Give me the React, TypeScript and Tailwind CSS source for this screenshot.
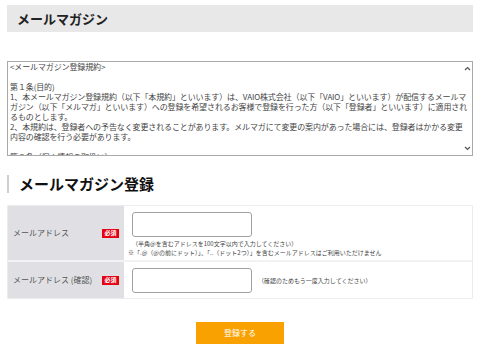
import React from "react";

const terms = `<メールマガジン登録規約>

第１条(目的)
1、本メールマガジン登録規約（以下「本規約」といいます）は、VAIO株式会社（以下「VAIO」といいます）が配信するメールマガジン（以下「メルマガ」といいます）への登録を希望されるお客様で登録を行った方（以下「登録者」といいます）に適用されるものとします。
2、本規約は、登録者への予告なく変更されることがあります。メルマガにて変更の案内があった場合には、登録者はかかる変更内容の確認を行う必要があります。

第２条（個人情報の取扱い）
1、登録者の個人情報は、VAIOの「個人情報の取扱いについて」に基づき、適切に管理いたします。
2、VAIOは、登録者の個人情報をメルマガの配信およびお問い合わせへの対応のために利用いたします。

第３条（登録）
1、登録者は、本規約に同意のうえ、VAIOの定める方法により登録を行うものとします。
2、登録者は、登録内容に変更が生じた場合、速やかに変更の手続きを行うものとします。

第４条（配信）
1、メルマガの配信内容、配信頻度および配信時期は、VAIOが任意に決定するものとします。
2、VAIOは、登録者への事前の通知なく、メルマガの配信を中止または終了することがあります。

第５条（登録の解除）
1、登録者は、VAIOの定める方法により、いつでも登録を解除することができます。
2、VAIOは、登録者が本規約に違反した場合、登録者の承諾なく登録を解除することがあります。

第６条（免責事項）
1、VAIOは、メルマガの内容について、その正確性、有用性等を保証するものではありません。
2、VAIOは、メルマガの配信の遅延、不達その他の事由により登録者に生じた損害について、一切の責任を負いません。

第７条（著作権）
メルマガに掲載される文章、画像等の著作権は、VAIOまたは正当な権利者に帰属します。

第８条（準拠法および管轄裁判所）
本規約は日本法に準拠し、本規約に関する紛争については、東京地方裁判所を第一審の専属的合意管轄裁判所とします。`;

function Badge() {
  return (
    <span className="flex h-[9px] w-[17px] items-center justify-center bg-[#e50012] text-[6px] font-bold leading-none text-white">
      必須
    </span>
  );
}

function App() {
  return (
    <div
      className="min-h-[350px] bg-white px-[7px] pt-[5px] text-[#333]"
      style={{ fontFamily: '"Noto Sans CJK JP", "Noto Sans", sans-serif' }}
    >
      <div className="flex h-[27px] items-center bg-[#e8e8e8] pl-[10px] text-[13px] font-bold text-[#222]">
        メールマガジン
      </div>

      <div className="relative mt-[29px]">
        <textarea
          readOnly
          value={terms}
          className="block h-[95px] w-full resize-none border border-[#a9a9a9] px-[2px] py-0 text-[8px] leading-[10px] tracking-[-0.12px] text-[#444] outline-none [&::-webkit-scrollbar]:w-[10px] [&::-webkit-scrollbar-track]:bg-[#f0f0f0] [&::-webkit-scrollbar-thumb]:bg-[#c8c8c8] [&::-webkit-scrollbar-button]:block [&::-webkit-scrollbar-button]:h-[13px] [&::-webkit-scrollbar-button]:bg-[#f0f0f0]"
        />
        {/* scroll arrows */}
        <svg className="pointer-events-none absolute right-[2px] top-[5px]" width="7" height="5" viewBox="0 0 7 5">
          <path d="M1 4 L3.5 1.5 L6 4" fill="none" stroke="#555" strokeWidth="1.2" />
        </svg>
        <svg className="pointer-events-none absolute bottom-[5px] right-[2px]" width="7" height="5" viewBox="0 0 7 5">
          <path d="M1 1 L3.5 3.5 L6 1" fill="none" stroke="#555" strokeWidth="1.2" />
        </svg>
      </div>

      <div className="mt-[19px] flex h-[18px] items-center border-l-2 border-[#cfcfcf] pl-[10px] text-[15px] font-bold leading-[18px] text-[#111]">
        メールマガジン登録
      </div>

      <div className="mt-[12px] border border-[#ececec]">
        <div className="flex h-[54px]">
          <div className="flex w-[116px] items-center justify-between bg-[#e0e0e4] px-[5px] text-[8px] text-[#555]">
            <span>メールアドレス</span>
            <Badge />
          </div>
          <div className="pl-[8px] pt-[6px]">
            <input className="block h-[25px] w-[120px] rounded-[3px] border border-[#a0a0a0] bg-white" />
            <p className="mt-[2px] text-[6px] leading-[9px] text-[#444]">
              （半角@を含むアドレスを100文字以内で入力してください）
            </p>
            <p className="-ml-[4px] text-[6px] leading-[9px] text-[#444]">
              ※「.@（@の前にドット）」、「..（ドット2つ）」を含むメールアドレスはご利用いただけません
            </p>
          </div>
        </div>
        <div className="flex h-[38px] border-t-2 border-[#f2f2f2]">
          <div className="flex w-[116px] items-center justify-between bg-[#e0e0e4] px-[5px] text-[8px] text-[#555]">
            <span>メールアドレス (確認)</span>
            <Badge />
          </div>
          <div className="flex items-center gap-[6px] pl-[8px]">
            <input className="block h-[25px] w-[120px] rounded-[3px] border border-[#a0a0a0] bg-white" />
            <span className="text-[6px] text-[#444]">（確認のためもう一度入力してください）</span>
          </div>
        </div>
      </div>

      <div className="mt-[23px] flex justify-center">
        <button className="h-[22px] w-[88px] bg-[#f9a100] text-[8px] text-white">登録する</button>
      </div>
    </div>
  );
}

export default App;
